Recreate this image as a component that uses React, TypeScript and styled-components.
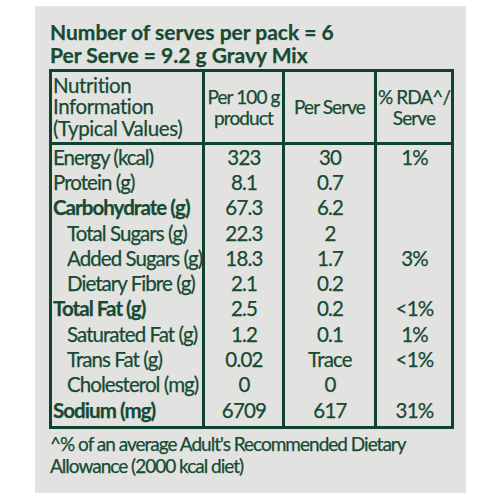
import React from "react";
import styled, { createGlobalStyle } from "styled-components";

const Global = createGlobalStyle`
  html, body { margin: 0; padding: 0; background: #ffffff; }
  body { font-family: Lato, "Liberation Sans", sans-serif; }
`;

const GREEN = "#164a32";
const LINE = "#0f4330";

const Page = styled.div`
  width: 500px;
  height: 500px;
  padding: 6px 0 0 35px;
  box-sizing: border-box;
`;

const Panel = styled.div`
  width: 431px;
  height: 487px;
  background: #e2e3e1;
  box-sizing: border-box;
  padding: 14px 0 0 14px;
  color: ${GREEN};
  -webkit-text-stroke: 0.25px ${GREEN};
`;

const Title = styled.div`
  font-weight: 700;
  font-size: 21px;
  line-height: 23px;
  padding-left: 1px;
`;

const Table = styled.table`
  margin-top: 3px;
  border-collapse: collapse;
  width: 402px;
  table-layout: fixed;
  border: 3px solid ${LINE};
  font-size: 20.5px;
  letter-spacing: -0.8px;
`;

const HeadCell = styled.th<{ $wide?: boolean }>`
  height: 70px;
  padding: 0 0 0 ${(p) => (p.$wide ? "1px" : "0")};
  font-weight: 400;
  font-size: ${(p) => (p.$wide ? "20.5px" : "19px")};
  letter-spacing: ${(p) => (p.$wide ? "-0.4px" : "-0.9px")};
  line-height: 21.5px;
  white-space: nowrap;
  text-align: ${(p) => (p.$wide ? "left" : "center")};
  vertical-align: middle;
  border: 3px solid ${LINE};
`;

const BodyRow = styled.tr<{ $last?: boolean }>`
  & > td {
    height: ${(p) => (p.$last ? "28px" : "25.3px")};
    padding-bottom: ${(p) => (p.$last ? "3px" : "0")};
  }
`;

const Cell = styled.td<{ $indent?: boolean; $bold?: boolean; $label?: boolean }>`
  box-sizing: border-box;
  padding-top: 0;
  padding-right: 0;
  padding-left: ${(p) => (p.$indent ? "15px" : "1px")};
  line-height: 25px;
  vertical-align: top;
  white-space: nowrap;
  letter-spacing: ${(p) => (p.$label ? "-0.95px" : "-0.8px")};
  font-weight: ${(p) => (p.$bold ? 700 : 400)};
  text-align: ${(p) => (p.$label ? "left" : "center")};
  border-left: 3px solid ${LINE};
  border-right: 3px solid ${LINE};
`;

const Footer = styled.div`
  margin-top: 4px;
  font-size: 19px;
  line-height: 22px;
  letter-spacing: -1px;
  padding-left: 1px;
`;

type Row = { name: string; a: string; b: string; c: string; bold?: boolean; indent?: boolean };

const rows: Row[] = [
  { name: "Energy (kcal)", a: "323", b: "30", c: "1%" },
  { name: "Protein (g)", a: "8.1", b: "0.7", c: "" },
  { name: "Carbohydrate (g)", a: "67.3", b: "6.2", c: "", bold: true },
  { name: "Total Sugars (g)", a: "22.3", b: "2", c: "", indent: true },
  { name: "Added Sugars (g)", a: "18.3", b: "1.7", c: "3%", indent: true },
  { name: "Dietary Fibre (g)", a: "2.1", b: "0.2", c: "", indent: true },
  { name: "Total Fat (g)", a: "2.5", b: "0.2", c: "<1%", bold: true },
  { name: "Saturated Fat (g)", a: "1.2", b: "0.1", c: "1%", indent: true },
  { name: "Trans Fat (g)", a: "0.02", b: "Trace", c: "<1%", indent: true },
  { name: "Cholesterol (mg)", a: "0", b: "0", c: "", indent: true },
  { name: "Sodium (mg)", a: "6709", b: "617", c: "31%", bold: true },
];

export default function App() {
  return (
    <Page>
      <Global />
      <Panel>
        <Title>
          Number of serves per pack = 6
          <br />
          Per Serve = 9.2 g Gravy Mix
        </Title>
        <Table>
          <colgroup>
            <col style={{ width: 153 }} />
            <col style={{ width: 80 }} />
            <col style={{ width: 92 }} />
            <col style={{ width: 77 }} />
          </colgroup>
          <thead>
            <tr>
              <HeadCell $wide>
                Nutrition
                <br />
                Information
                <br />
                (Typical Values)
              </HeadCell>
              <HeadCell>
                Per 100 g
                <br />
                product
              </HeadCell>
              <HeadCell>Per Serve</HeadCell>
              <HeadCell>
                % RDA^/
                <br />
                Serve
              </HeadCell>
            </tr>
          </thead>
          <tbody>
            {rows.map((r, i) => (
              <BodyRow key={r.name} $last={i === rows.length - 1}>
                <Cell $label $bold={r.bold} $indent={r.indent}>
                  {r.name}
                </Cell>
                <Cell>{r.a}</Cell>
                <Cell>{r.b}</Cell>
                <Cell>{r.c}</Cell>
              </BodyRow>
            ))}
          </tbody>
        </Table>
        <Footer>
          ^% of an average Adult's Recommended Dietary
          <br />
          Allowance (2000 kcal diet)
        </Footer>
      </Panel>
    </Page>
  );
}
